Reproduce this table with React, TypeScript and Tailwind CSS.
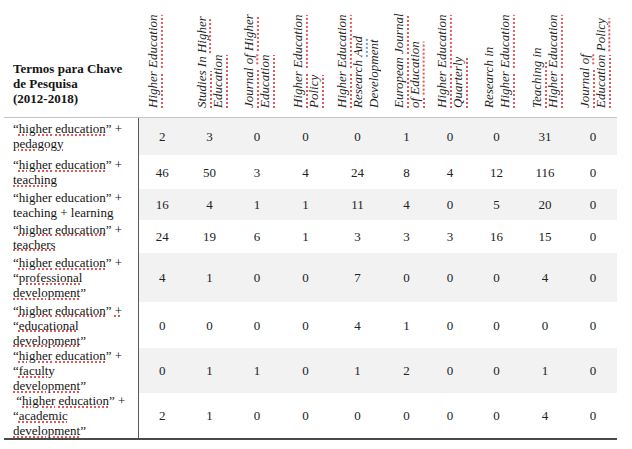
import React from 'react';

// spell-check marks, like the Word original
function U({ children, blue }: { children: React.ReactNode; blue?: boolean }) {
  return (
    <span
      className={
        blue
          ? 'underline decoration-dotted decoration-[#6b9ae0] decoration-[1.5px] underline-offset-[1px]'
          : 'underline decoration-dotted decoration-[#e05a5a] decoration-[1.5px] underline-offset-[1px]'
      }
    >
      {children}
    </span>
  );
}

const HE = (
  <>
    “<U>higher</U> <U>education</U>”
  </>
);

const journals: { label: React.ReactNode; width: string; shift?: string }[] = [
  { label: <><U>Higher</U> <U>Education</U></>, width: 'w-[48px]', shift: 'mr-[18px]' },
  { label: <><U>Studies</U> In <U>Higher</U> <U>Education</U></>, width: 'w-[47px]' },
  { label: <><U>Journal</U> <U>of</U> <U>Higher</U> <U>Education</U></>, width: 'w-[48px]' },
  { label: <><U>Higher</U> <U>Education</U> <U>Policy</U></>, width: 'w-[49px]' },
  { label: <><U>Higher</U> <U>Education</U> Research <U blue>And</U> Development</>, width: 'w-[55px]' },
  { label: <><U>European</U> <U>Journal</U> <U>of</U> <U>Education</U></>, width: 'w-[43px]' },
  { label: <><U>Higher</U> <U>Education</U> <U>Quarterly</U></>, width: 'w-[44px]' },
  { label: <>Research in <U>Higher</U> <U>Education</U></>, width: 'w-[49px]' },
  { label: <><U>Teaching</U> in <U>Higher</U> <U>Education</U></>, width: 'w-[48px]' },
  { label: <><U>Journal</U> <U>of</U> <U>Education</U> <U>Policy</U></>, width: 'w-[48px]' },
];

const rows: { term: React.ReactNode; h: string; values: number[] }[] = [
  { term: <>{HE} + <U>pedagogy</U></>, h: 'h-[38px]', values: [2, 3, 0, 0, 0, 1, 0, 0, 31, 0] },
  { term: <>{HE} + <U>teaching</U></>, h: 'h-[34px]', values: [46, 50, 3, 4, 24, 8, 4, 12, 116, 0] },
  { term: <>“higher education” + teaching + learning</>, h: 'h-[31px]', values: [16, 4, 1, 1, 11, 4, 0, 5, 20, 0] },
  { term: <>{HE} + <U>teachers</U></>, h: 'h-[33px]', values: [24, 19, 6, 1, 3, 3, 3, 16, 15, 0] },
  { term: <>{HE} + “<U>professional</U> <U>development</U>”</>, h: 'h-[49px]', values: [4, 1, 0, 0, 7, 0, 0, 0, 4, 0] },
  { term: <>{HE} <U>+</U> “<U>educational</U> <U>development</U>”</>, h: 'h-[46px]', values: [0, 0, 0, 0, 4, 1, 0, 0, 0, 0] },
  { term: <>{HE} + “<U>faculty</U> <U>development</U>”</>, h: 'h-[45px]', values: [0, 1, 1, 0, 1, 2, 0, 0, 1, 0] },
  { term: <>{'\u00a0'}{HE} + “<U>academic</U> <U>development</U>”</>, h: 'h-[44px]', values: [2, 1, 0, 0, 0, 0, 0, 0, 4, 0] },
];

export default function App() {
  return (
    <div className="h-[449px] w-[632px] bg-white font-['Liberation_Serif','Times_New_Roman',serif] text-[#151515]">
      <table className="ml-[4px] table-fixed border-collapse">
        <colgroup>
          <col className="w-[134px]" />
          {journals.map((j, i) => (
            <col key={i} className={j.width} />
          ))}
        </colgroup>
        <thead>
          <tr className="h-[117px]">
            <th className="border-b border-[#c4c4c4] pb-[11px] pl-[9px] pr-[4px] text-left align-bottom text-[13px] font-bold leading-[15px]">
              Termos para Chave
              <br />
              de Pesquisa
              <br />
              (2012-2018)
            </th>
            {journals.map((j, i) => (
              <th key={i} className="border-b border-[#c4c4c4] p-0 pb-[9px] align-bottom font-normal">
                <div className="flex justify-center">
                  <div
                    className={`h-[100px] rotate-180 text-left text-[13px] italic leading-[16px] text-[#222] [writing-mode:vertical-rl] ${j.shift ?? ''}`}
                  >
                    {j.label}
                  </div>
                </div>
              </th>
            ))}
          </tr>
        </thead>
        <tbody>
          {rows.map((r, ri) => (
            <tr key={ri} className={`${r.h} ${ri === rows.length - 1 ? 'border-b-2 border-[#4a4a4a]' : ''}`}>
              <td className="border-r border-[#5a5a5a] py-0 pl-[9px] pr-[10px] align-middle text-[13px] leading-[15px]">
                {r.term}
              </td>
              {r.values.map((v, vi) => (
                <td
                  key={vi}
                  className={`p-0 text-center align-middle text-[13px] leading-[15px] text-[#222] ${ri % 2 === 0 ? 'bg-[#f2f2f2]' : 'bg-white'}`}
                >
                  {v}
                </td>
              ))}
            </tr>
          ))}
        </tbody>
      </table>
    </div>
  );
}
